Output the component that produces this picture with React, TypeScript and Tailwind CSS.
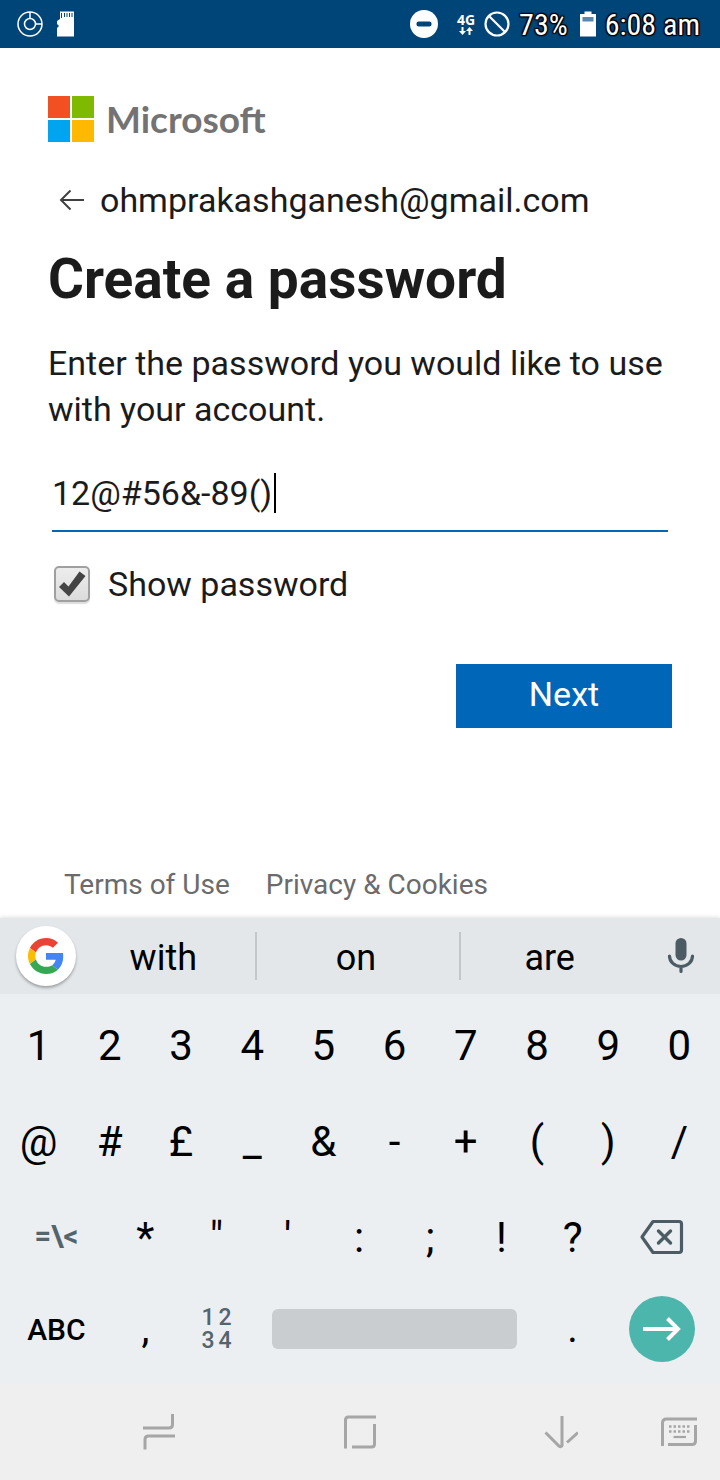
import { useState, type ReactNode } from "react";

const halo =
  "[text-shadow:0_0_2px_#fff,0_0_2px_#fff,0_0_2px_#fff,0_0_3px_#fff]";
const darkHalo =
  "[text-shadow:0_0_2px_#000,0_0_2px_#000,1px_1px_1px_#000,-1px_-1px_1px_#000,1px_-1px_1px_#000,-1px_1px_1px_#000]";

function StatusBar() {
  return (
    <header className="flex h-12 items-center justify-between bg-[#004578] px-4 text-white">
      <div className="flex items-center gap-3">
        <svg viewBox="0 0 28 28" className="size-7" fill="none" stroke="currentColor" strokeWidth="1.5" aria-label="Data saver">
          <circle cx="14" cy="14" r="12" />
          <circle cx="14" cy="14" r="5.5" />
          <path d="M14 2v6.500M19.500 14H26" />
        </svg>
        <svg viewBox="0 0 18 26" className="h-[26px] w-[18px]" aria-label="SD card">
          <path fill="currentColor" d="M4 0.500h14v25H1V17l2-2-2-2v-3l3-2z" />
          <path stroke="#004578" strokeWidth="1" d="M5.500 2v5M8.500 2v4M11 2v4M13.500 2v4M16 2v4" />
        </svg>
      </div>
      <div className="flex items-center">
        <svg viewBox="0 0 28 28" className="size-7" aria-label="Do not disturb">
          <circle cx="14" cy="14" r="14" fill="currentColor" />
          <rect x="6.500" y="11.500" width="15" height="5" rx="2" fill="#004578" />
        </svg>
        <div className="ml-[18px] flex w-5 flex-col items-center font-['Open_Sans',sans-serif] text-sm leading-[14px] font-bold">
          <span>4G</span>
          <svg viewBox="0 0 14 8" className="h-2 w-[14px]" fill="currentColor">
            <path d="M2.500 0h2v4H7L3.500 8 0 4h2.500zM9.500 8h2V4H14l-3.500-4L7 4h2.500z" />
          </svg>
        </div>
        <svg viewBox="0 0 26 26" className="ml-2 size-[26px]" fill="none" stroke="currentColor" strokeWidth="2.200" aria-label="Blocked">
          <circle cx="13" cy="13" r="11.500" />
          <path d="M5 5l16 16" />
        </svg>
        <span className={`ml-[9px] font-['Roboto_Condensed',Roboto,sans-serif] text-[30px] ${darkHalo}`}>73%</span>
        <svg viewBox="0 0 16 26" className="ml-3 h-[26px] w-4" aria-label="Battery">
          <path fill="currentColor" d="M4.500 0.500h7V3H16v22.500H0V3h4.500z" />
          <rect x="2.500" y="6" width="11" height="4.500" fill="#5c88ab" />
        </svg>
        <span className={`mr-1 ml-[9px] font-['Roboto_Condensed',Roboto,sans-serif] text-[30px] ${darkHalo}`}>6:08 am</span>
      </div>
    </header>
  );
}

function SignUpForm() {
  const [password, setPassword] = useState("12@#56&-89()");
  const [shown, setShown] = useState(true);
  return (
    <main className="flex flex-1 flex-col px-12 pt-12 text-[#1b1b1b]">
      <div className="flex items-center gap-3">
        <svg viewBox="0 0 46 46" className="size-[46px]" aria-hidden="true">
          <path fill="#f25022" d="M0 0h22v22H0z" />
          <path fill="#7fba00" d="M24 0h22v22H24z" />
          <path fill="#00a4ef" d="M0 24h22v22H0z" />
          <path fill="#ffb900" d="M24 24h22v22H24z" />
        </svg>
        <span className="font-[Lato,sans-serif] text-[37px] leading-[46px] font-bold text-[#737373]">Microsoft</span>
      </div>

      <div className="mt-8 flex h-[52px] items-center gap-3 pl-2">
        <button type="button" aria-label="Back">
          <svg viewBox="0 0 32 32" className="size-8" fill="none" stroke="#404040" strokeWidth="2">
            <path d="M28 16H5M14.500 6.500L5 16l9.500 9.500" />
          </svg>
        </button>
        <span className="text-[34px]">ohmprakashganesh@gmail.com</span>
      </div>

      <h1 className="mt-5 text-[55px] leading-[66px] font-bold">Create a password</h1>
      <p className="mt-7 text-[34px] leading-[46px]">
        Enter the password you would like to use with your account.
      </p>

      <form onSubmit={(e) => e.preventDefault()}>
        <label className="mx-1 mt-6 flex h-[76px] cursor-text items-center border-b-2 border-[#0067b8]">
          <input
            aria-label="Password"
            type={shown ? "text" : "password"}
            value={password}
            onChange={(e) => setPassword(e.target.value)}
            className="min-w-0 bg-transparent text-[34px] caret-transparent outline-none [field-sizing:content]"
          />
          <span className="ml-[2px] h-10 w-[2px] bg-black" />
        </label>

        <label className="mt-7 ml-[6px] flex h-12 items-center gap-[18px] text-[34px]">
          <span className="grid place-items-center">
            <input
              type="checkbox"
              checked={shown}
              onChange={(e) => setShown(e.target.checked)}
              className="peer col-start-1 row-start-1 size-9 appearance-none rounded-[5px] border-2 border-[#a0a0a0] bg-linear-to-b from-[#ededed] to-[#dcdcdc] shadow-[0_2px_1px_#dddddd]"
            />
            <svg viewBox="0 0 36 36" className="invisible col-start-1 row-start-1 size-9 peer-checked:visible" aria-hidden="true">
              <path fill="#444" d="M5 21l5-5 4.500 4.500L25.500 5.500l6 4.500L15 30.500z" />
            </svg>
          </span>
          Show password
        </label>

        <div className="mt-14 flex justify-end">
          <button type="submit" className="h-16 w-[216px] bg-[#0067b8] pb-1 text-[34px] leading-[60px] text-white">
            Next
          </button>
        </div>
      </form>

      <footer className="mt-auto flex gap-9 px-4 pt-10 pb-[15px] text-[28px] leading-9 text-[#6b6b6b]">
        <a href="#terms">Terms of Use</a>
        <a href="#privacy">Privacy &amp; Cookies</a>
      </footer>
    </main>
  );
}

function Key({ children, wide, className = "text-[42px]" }: { children: ReactNode; wide?: boolean; className?: string }) {
  return (
    <button type="button" className={`flex min-w-0 items-center justify-center ${wide ? "col-span-3" : "col-span-2"} ${className}`}>
      {children}
    </button>
  );
}

function GoogleIcon() {
  return (
    <svg viewBox="0 0 48 48" className="size-9" aria-hidden="true">
      <path fill="#EA4335" d="M24 9.500c3.540 0 6.710 1.220 9.210 3.600l6.850-6.850C35.900 2.380 30.470 0 24 0 14.620 0 6.510 5.380 2.560 13.220l7.980 6.190C12.430 13.720 17.740 9.500 24 9.500z" />
      <path fill="#4285F4" d="M46.980 24.550c0-1.570-.15-3.090-.38-4.550H24v9.020h12.940c-.58 2.960-2.260 5.480-4.780 7.180l7.730 6c4.510-4.180 7.090-10.360 7.090-17.650z" />
      <path fill="#FBBC05" d="M10.530 28.590c-.48-1.450-.76-2.990-.76-4.590s.27-3.140.76-4.590l-7.980-6.190C.92 16.460 0 20.120 0 24c0 3.880.92 7.540 2.560 10.780l7.970-6.190z" />
      <path fill="#34A853" d="M24 48c6.480 0 11.930-2.130 15.890-5.810l-7.730-6c-2.150 1.450-4.920 2.300-8.160 2.300-6.260 0-11.570-4.220-13.470-9.910l-7.980 6.190C6.510 42.620 14.620 48 24 48z" />
    </svg>
  );
}

function Keyboard() {
  return (
    <section aria-label="Keyboard" className="bg-[#ebeff2] text-black shadow-[0_-1px_4px_rgba(0,0,0,0.12)]">
      <div className={`grid h-[76px] grid-cols-[60px_180fr_204fr_180fr_78px] items-center bg-[#e3e7ea] pl-4 text-[36px] ${halo}`}>
        <button type="button" aria-label="Google search" className="grid size-[60px] place-items-center rounded-full bg-white shadow-[0_2px_3px_rgba(0,0,0,0.3)]">
          <GoogleIcon />
        </button>
        <button type="button" className="h-12 border-r-2 border-[#c3c7ca] pr-1 leading-[52px]">with</button>
        <button type="button" className="h-12 border-r-2 border-[#c3c7ca] pr-1 leading-[52px]">on</button>
        <button type="button" className="h-12 pr-1 leading-[52px]">are</button>
        <button type="button" aria-label="Voice input" className="grid place-items-center">
          <svg viewBox="0 0 28 36" className="h-9 w-7" fill="none" stroke="#4c5c64" strokeWidth="3.200">
            <rect x="8.500" y="0" width="11" height="22.500" rx="5.500" fill="#4c5c64" stroke="none" />
            <path strokeLinecap="round" d="M2.500 18a11.500 10.500 0 0 0 23 0M14 28.500v5" />
          </svg>
        </button>
      </div>

      <div className={`pt-[3px] pr-[5px] pb-[11px] pl-[3px] ${halo}`}>
        <div className="grid h-24 grid-cols-20">
          {["1", "2", "3", "4", "5", "6", "7", "8", "9", "0"].map((k) => (
            <Key key={k}>{k}</Key>
          ))}
        </div>
        <div className="grid h-24 grid-cols-20">
          {["@", "#", "£", "_", "&", "-", "+", "(", ")", "/"].map((k) => (
            <Key key={k}>{k}</Key>
          ))}
        </div>
        <div className="grid h-24 grid-cols-20">
          <Key wide className="text-[29px] font-bold text-[#54646c]">=\&lt;</Key>
          {["*", '"', "'", ":", ";", "!", "?"].map((k) => (
            <Key key={k}>{k}</Key>
          ))}
          <Key wide>
            <svg viewBox="0 0 44 36" className="h-9 w-11" fill="none" stroke="#4c5c64" strokeWidth="3.200" strokeLinejoin="round" aria-label="Backspace">
              <path d="M13 2.500h26q2.500 0 2.500 2.500v26q0 2.500-2.500 2.500H13L2 18z" />
              <path strokeWidth="3.400" strokeLinecap="round" d="M18.500 12l12 12M30.500 12l-12 12" />
            </svg>
          </Key>
        </div>
        <div className="grid h-[88px] grid-cols-20">
          <Key wide className="text-[30px] font-medium">ABC</Key>
          <Key className="text-[40px]">,</Key>
          <Key className="text-[23px] font-medium text-[#54646c]">
            <span className="grid grid-cols-2 gap-x-1 leading-[23px]">
              <span>1</span>
              <span>2</span>
              <span>3</span>
              <span>4</span>
            </span>
          </Key>
          <button type="button" aria-label="Space" className="col-span-8 mx-5 h-10 self-center rounded-md bg-[#c9cdd0]" />
          <Key className="text-[40px]">.</Key>
          <Key wide>
            <span className="grid size-[66px] place-items-center rounded-full bg-[#4db6ac]">
              <svg viewBox="0 0 40 26" className="h-[26px] w-10" fill="none" stroke="#fff" strokeWidth="4" aria-label="Enter">
                <path d="M1 13h35M25.500 2.500L36 13 25.500 23.500" />
              </svg>
            </span>
          </Key>
        </div>
      </div>
    </section>
  );
}

function NavigationBar() {
  return (
    <nav className="flex h-24 items-center bg-[#efefef] pr-[23px] pl-[58px] text-[#a6a6a6]">
      <button type="button" aria-label="Recent apps" className="flex flex-1 justify-center">
        <svg viewBox="0 0 32 36" className="h-9 w-8" fill="none" stroke="currentColor" strokeWidth="3">
          <path d="M0 14h26q3.500 0 3.500-3.500V0M32 22H5.500Q2 22 2 25.500V35.500" />
        </svg>
      </button>
      <button type="button" aria-label="Home" className="flex flex-1 justify-center">
        <svg viewBox="0 0 32 36" className="h-9 w-8" fill="none" stroke="currentColor" strokeWidth="3">
          <path d="M1.500 34.500V6Q1.500 3 4.500 3H32M8 33h19.500q3 0 3-3V10" />
        </svg>
      </button>
      <button type="button" aria-label="Hide keyboard" className="flex flex-1 justify-center">
        <svg viewBox="0 0 34 36" className="h-9 w-[34px]" fill="none" stroke="currentColor" strokeWidth="3">
          <path d="M18 2v29.500q-1 2-3 .5L1.500 18.500M34 18.500L23 28.500" />
        </svg>
      </button>
      <button type="button" aria-label="Switch keyboard" className="flex w-9 justify-center">
        <svg viewBox="0 0 36 30" className="h-[30px] w-9" fill="none" stroke="currentColor" strokeWidth="3">
          <path d="M1.500 29V6q0-4 4-4H36M7 27.500h24q3.500 0 3.500-3.500V8" />
          <path strokeWidth="2.600" strokeDasharray="2.500 2" d="M8 9.500h21.500M8 14.500h21.500" />
          <path strokeWidth="2.200" d="M12.500 20H25" />
        </svg>
      </button>
    </nav>
  );
}

export default function App() {
  return (
    <div className="flex min-h-screen flex-col bg-white font-[Roboto,sans-serif]">
      <StatusBar />
      <SignUpForm />
      <Keyboard />
      <NavigationBar />
    </div>
  );
}
